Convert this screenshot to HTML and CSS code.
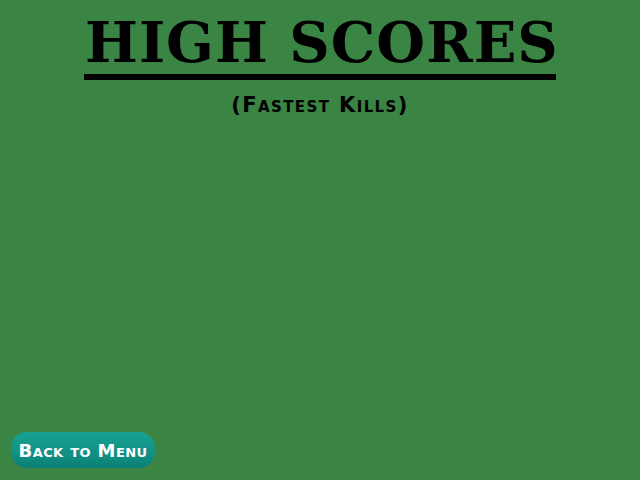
FILE: index.html
```html
<!DOCTYPE html>
<html>
<head>
<meta charset="utf-8">
<link rel="stylesheet" href="styles.css">
</head>
<body>
<div class="screen">
  <header class="header">
    <h1 class="title">HIGH SCORES</h1>
    <p class="subtitle">(Fastest Kills)</p>
  </header>
  <main class="scores"></main>
  <footer class="footer">
    <button class="back-btn">Back to Menu</button>
  </footer>
</div>
</body>
</html>
```

FILE: styles.css
```css
html, body {
  margin: 0;
  padding: 0;
  background: #3a8444;
}
.screen {
  width: 640px;
  height: 480px;
  display: flex;
  flex-direction: column;
  font-family: "DejaVu Serif", serif;
}
.header {
  display: flex;
  flex-direction: column;
  align-items: center;
  padding-top: 12px;
}
.title {
  margin: 0;
  font-size: 56px;
  font-weight: bold;
  line-height: 60px;
  letter-spacing: 1px;
  text-indent: 1px;
  white-space: nowrap;
  color: #000;
  border-bottom: 6px solid #000;
  padding-bottom: 2px;
  width: 472px;
  text-align: center;
}
.subtitle {
  margin: 14px 0 0;
  font-family: "DejaVu Sans", sans-serif;
  font-weight: bold;
  font-variant: small-caps;
  font-size: 21px;
  line-height: 22px;
  letter-spacing: 1.4px;
  color: #000;
}
.scores {
  flex: 1;
}
.footer {
  padding: 0 0 12px 11px;
}
.back-btn {
  width: 144px;
  height: 36px;
  border: none;
  border-radius: 16px;
  background: linear-gradient(#17a293, #0f8d80 70%, #0b7d72);
  color: #fff;
  font-family: "DejaVu Sans", sans-serif;
  font-weight: bold;
  font-variant: small-caps;
  font-size: 18px;
  padding: 0;
  letter-spacing: 0.4px;
}
```
